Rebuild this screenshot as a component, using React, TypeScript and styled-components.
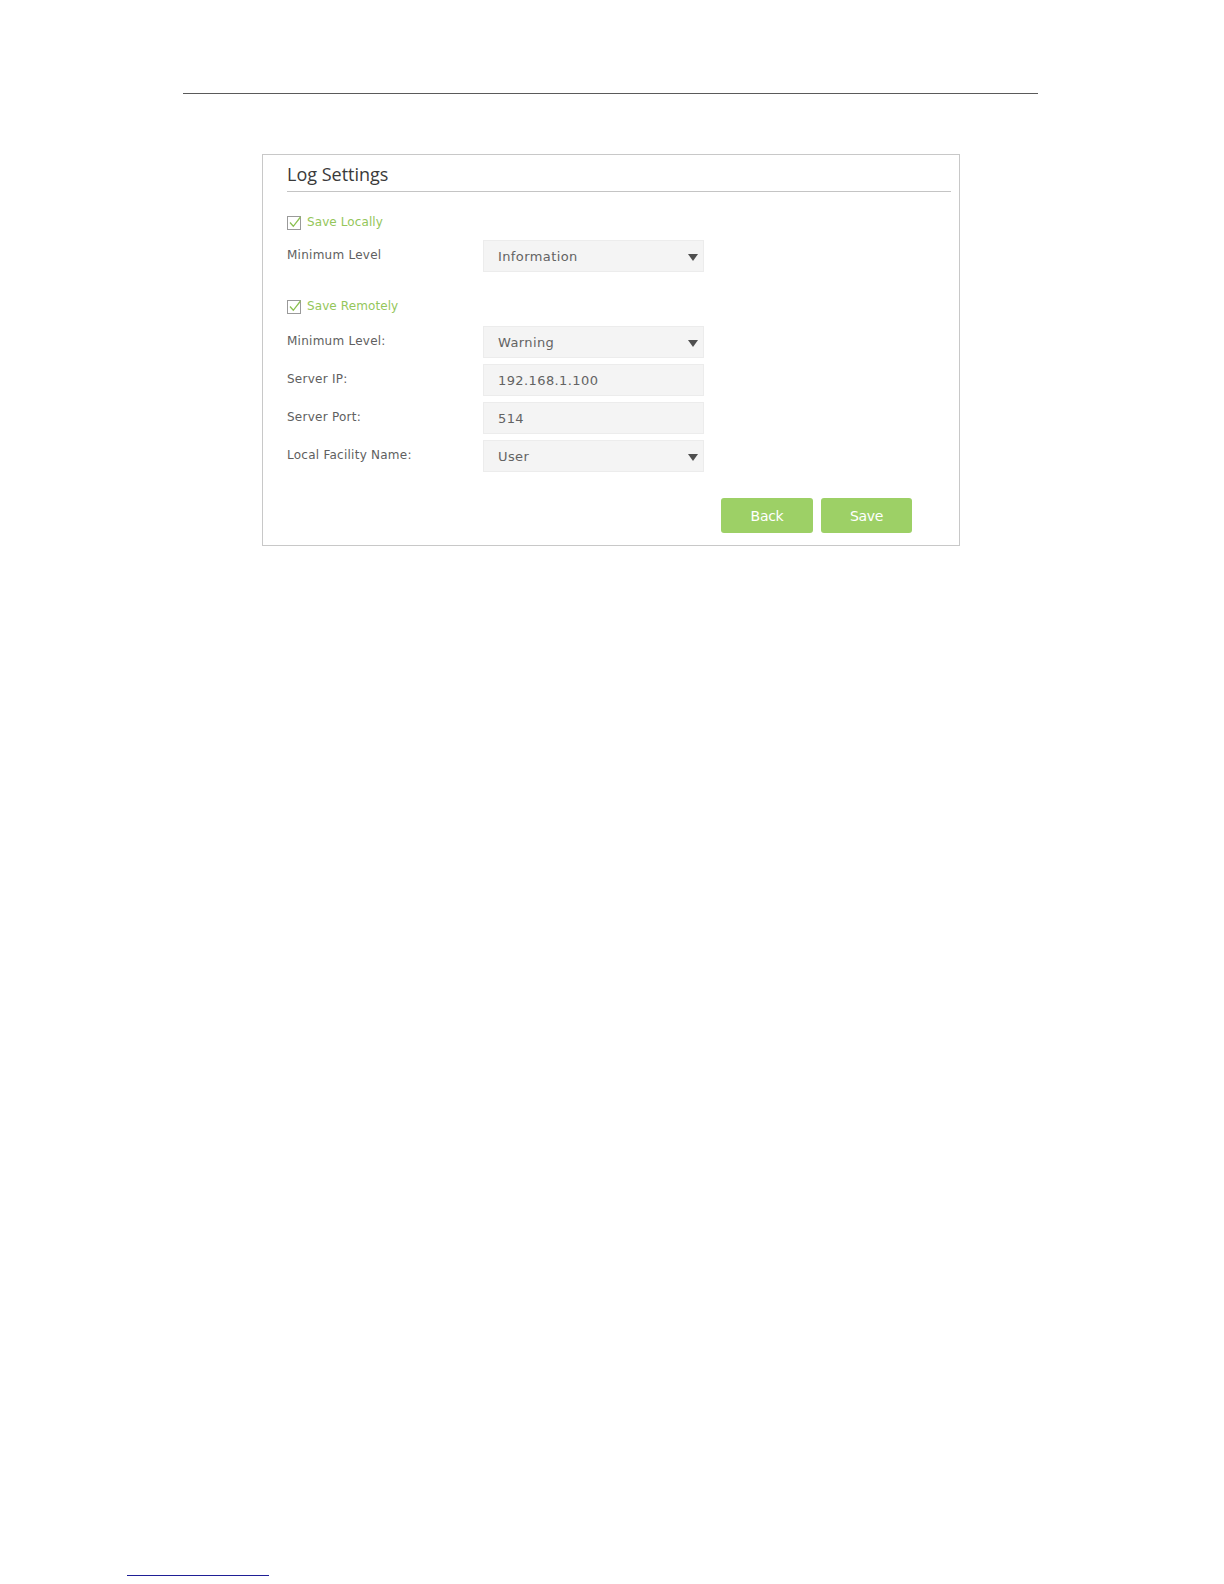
import React from "react";
import styled, { createGlobalStyle } from "styled-components";

const GlobalStyle = createGlobalStyle`
  html, body {
    margin: 0;
    padding: 0;
    background: #ffffff;
  }
  body {
    font-family: "DejaVu Sans", Verdana, sans-serif;
  }
`;

const levelOptions = ["Emergency", "Alert", "Critical", "Error", "Warning", "Notice", "Information", "Debug"];

const Page = styled.div`
  display: flex;
  flex-direction: column;
  height: 1584px;
  padding-top: 93px;
  box-sizing: border-box;
`;

const HeaderRule = styled.div`
  margin-left: 183px;
  width: 855px;
  height: 1px;
  background: #5a5a5a;
`;

const Panel = styled.section`
  margin: 60px 0 0 262px;
  width: 698px;
  height: 392px;
  box-sizing: border-box;
  border: 1px solid #c8c8c8;
  padding: 7px 8px 12px 24px;
  display: flex;
  flex-direction: column;
`;

const Title = styled.h2`
  margin: 0;
  font-family: "Open Sans", "DejaVu Sans", sans-serif;
  font-size: 18px;
  font-weight: 400;
  line-height: 24px;
  color: #3a3a3a;
  padding-bottom: 5px;
  border-bottom: 1px solid #c4c4c4;
`;

const Section = styled.div<{ $top: number; $gap: number }>`
  display: flex;
  flex-direction: column;
  margin-top: ${({ $top }) => $top}px;
  gap: ${({ $gap }) => $gap}px;
`;

const CheckRow = styled.label`
  display: flex;
  align-items: center;
  gap: 5px;
  height: 20px;
  font-size: 12px;
  letter-spacing: 0.1px;
  color: #94c65a;
  cursor: pointer;
`;

const Fields = styled.div`
  display: flex;
  flex-direction: column;
  gap: 6px;
`;

const FieldRow = styled.div`
  display: flex;
  align-items: center;
  height: 32px;
`;

const Label = styled.span`
  width: 196px;
  font-size: 12px;
  letter-spacing: 0.25px;
  color: #606060;
  margin-top: -3px;
`;

const Control = styled.div`
  position: relative;
  width: 221px;
  height: 32px;
  box-sizing: border-box;
  background: #f4f4f4;
  border: 1px solid #ececec;
  display: flex;
  align-items: center;
  padding-left: 14px;
  font-size: 13px;
  letter-spacing: 0.4px;
  color: #636363;
`;

const Arrow = styled.span`
  position: absolute;
  right: 5px;
  top: 13px;
  width: 0;
  height: 0;
  border-left: 5px solid transparent;
  border-right: 5px solid transparent;
  border-top: 7px solid #4f4f4f;
`;

const Actions = styled.div`
  display: flex;
  justify-content: flex-end;
  gap: 8px;
  margin-top: 26px;
  padding-right: 39px;
`;

const Button = styled.button<{ $width: number }>`
  width: ${({ $width }) => $width}px;
  height: 35px;
  border: none;
  border-radius: 3px;
  background: #9dd066;
  color: #ffffff;
  font-family: "DejaVu Sans", Verdana, sans-serif;
  font-size: 14px;
  letter-spacing: -0.3px;
  cursor: pointer;
`;

const FooterLink = styled.a`
  margin: auto 0 8px 127px;
  width: 142px;
  height: 1px;
  background: #1f1f96;
  display: block;
`;

const CheckIcon = () => (
  <svg width="15" height="15" viewBox="0 0 15 15">
    <rect x="0.5" y="1.5" width="13" height="13" fill="#fff" stroke="#9a9a9a" />
    <path d="M3 7.5 L6.3 11.3 L13.5 2" fill="none" stroke="#8cc152" strokeWidth="1.3" />
  </svg>
);

const Select = ({ value }: { value: string }) => (
  <Control>
    {value}
    <Arrow />
  </Control>
);

const Field = ({ label, children }: { label: string; children: React.ReactNode }) => (
  <FieldRow>
    <Label>{label}</Label>
    {children}
  </FieldRow>
);

export default function App() {
  return (
    <Page>
      <GlobalStyle />
      <HeaderRule />
      <Panel>
        <Title>Log Settings</Title>

        <Section $top={20} $gap={8}>
          <CheckRow>
            <CheckIcon />
            Save Locally
          </CheckRow>
          <Fields>
            <Field label="Minimum Level">
              <Select value={levelOptions[6]} />
            </Field>
          </Fields>
        </Section>

        <Section $top={24} $gap={10}>
          <CheckRow>
            <CheckIcon />
            Save Remotely
          </CheckRow>
          <Fields>
            <Field label="Minimum Level:">
              <Select value={levelOptions[4]} />
            </Field>
            <Field label="Server IP:">
              <Control>192.168.1.100</Control>
            </Field>
            <Field label="Server Port:">
              <Control>514</Control>
            </Field>
            <Field label="Local Facility Name:">
              <Select value="User" />
            </Field>
          </Fields>
        </Section>

        <Actions>
          <Button $width={92}>Back</Button>
          <Button $width={91}>Save</Button>
        </Actions>
      </Panel>
      <FooterLink href="#" aria-label="link" />
    </Page>
  );
}
